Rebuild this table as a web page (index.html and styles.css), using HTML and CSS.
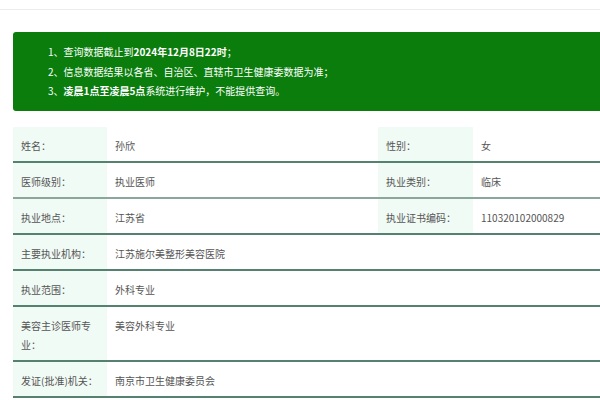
FILE: index.html
```html
<!DOCTYPE html>
<html lang="zh-CN">
<head>
<meta charset="utf-8">
<link rel="stylesheet" href="styles.css">
</head>
<body>
<div class="topbar"></div>
<div class="notice">
  <p>1、查询数据截止到<b>2024年12月8日22时</b>；</p>
  <p>2、信息数据结果以各省、自治区、直辖市卫生健康委数据为准；</p>
  <p>3、<b>凌晨1点至凌晨5点</b>系统进行维护，不能提供查询。</p>
</div>
<div class="table">
  <div class="row">
    <div class="label">姓名：</div><div class="value">孙欣</div>
    <div class="label">性别：</div><div class="value">女</div>
  </div>
  <div class="row alt">
    <div class="label">医师级别：</div><div class="value">执业医师</div>
    <div class="label">执业类别：</div><div class="value">临床</div>
  </div>
  <div class="row">
    <div class="label">执业地点：</div><div class="value">江苏省</div>
    <div class="label">执业证书编码：</div><div class="value">110320102000829</div>
  </div>
  <div class="row">
    <div class="label">主要执业机构：</div><div class="value wide">江苏施尔美整形美容医院</div>
  </div>
  <div class="row">
    <div class="label">执业范围：</div><div class="value wide">外科专业</div>
  </div>
  <div class="row">
    <div class="label">美容主诊医师专业：</div><div class="value wide">美容外科专业</div>
  </div>
  <div class="row">
    <div class="label">发证(批准)机关：</div><div class="value wide">南京市卫生健康委员会</div>
  </div>
</div>
</body>
</html>
```

FILE: styles.css
```css
html, body {
  margin: 0;
  padding: 0;
  background: #ffffff;
  font-family: "Noto Sans CJK SC", "Noto Sans", sans-serif;
  overflow: hidden;
}
.topbar {
  height: 9px;
  border-bottom: 1px solid #ececec;
}
.notice {
  margin: 22px 0 0 13px;
  background: #0a7d0c;
  border-radius: 3px 0 0 3px;
  padding: 10px 0 10px 35px;
  color: #ffffff;
  font-size: 10px;
  line-height: 19.5px;
}
.notice p {
  margin: 0;
}
.notice b {
  font-weight: 600;
}
.table {
  margin: 16px 0 0 13px;
  font-size: 10px;
  line-height: 19px;
  color: #555555;
}
.row {
  display: grid;
  grid-template-columns: 94px 271px 95px 1fr;
  border-bottom: 2px solid #56806f;
}
.row.alt {
  border-bottom: 2px solid #8ba79c;
}
.label {
  background: #f1fbf6;
  padding: 9px 6px 6px 8px;
}
.value {
  padding: 9px 8px 6px 8px;
}
.value.wide {
  grid-column: 2 / 5;
}
```
